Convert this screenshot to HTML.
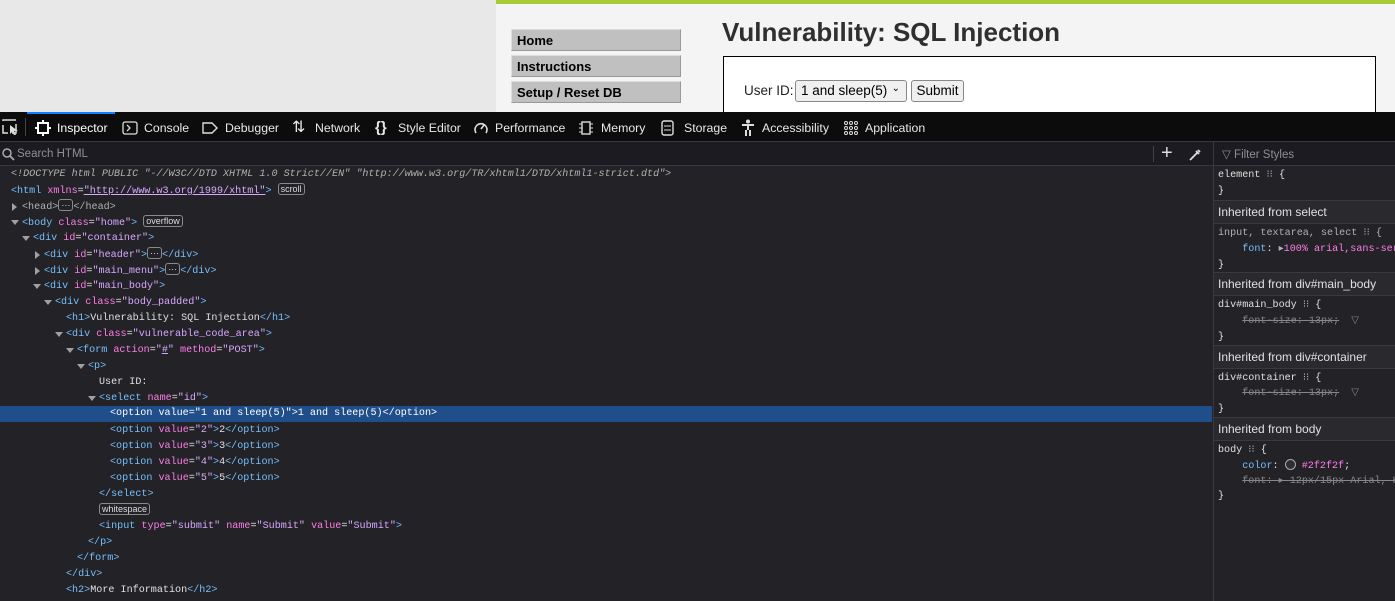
<!DOCTYPE html>
<html><head><style>
*{margin:0;padding:0;box-sizing:border-box}
body{width:1395px;height:601px;overflow:hidden;background:#232327;font-family:"Liberation Sans",sans-serif;position:relative}
.abs{position:absolute}
.m{font-family:"Liberation Mono",monospace;font-size:10.1px;white-space:pre;color:#e0e0e2}
.t{color:#75bfff}.a{color:#ff7de9}.v{color:#d7a8ff}.g{color:#b1b1b3}
.row{position:absolute;height:16px;line-height:16px;left:0;width:1212px}
.arr{position:absolute;top:5px;width:0;height:0}
.dn{border-left:4px solid transparent;border-right:4px solid transparent;border-top:5px solid #a0a0a0}
.rt{border-top:4px solid transparent;border-bottom:4px solid transparent;border-left:5px solid #a0a0a0;top:4px}
.badge{display:inline-block;border:1px solid #8a8a8a;border-radius:3px;font-size:9px;line-height:10px;padding:0 2px;color:#ddd;vertical-align:1px;font-family:"Liberation Sans",sans-serif}
.tb{position:absolute;top:113px;height:30px;line-height:30px;color:#e8e8e8;font-size:12.3px}
.menu{position:absolute;left:511px;width:170px;height:22px;background:#c0c0c0;border:1px solid #999;border-top-color:#ddd;border-left-color:#ddd;font-weight:bold;font-size:13px;line-height:21px;padding-left:5px;color:#000}
.sec{position:absolute;left:1214px;width:181px;height:24px;background:#2a2a2e;border-top:1px solid #3a3a3e;border-bottom:1px solid #3a3a3e;color:#e0e0e2;font-size:12px;line-height:23px;padding-left:4px}
.sr{position:absolute;left:1218px;line-height:16px}
</style></head><body>
<div class="abs" style="left:0;top:0;width:496px;height:112px;background:#e8e8e8"></div>
<div class="abs" style="left:496px;top:0;width:899px;height:112px;background:#f4f4f4"></div>
<div class="abs" style="left:496px;top:0;width:899px;height:4px;background:#a5cc36"></div>
<div class="menu" style="top:29px">Home</div>
<div class="menu" style="top:55px">Instructions</div>
<div class="menu" style="top:81px">Setup / Reset DB</div>
<div class="abs" style="left:722px;top:17px;font-size:26px;font-weight:bold;color:#2f2f2f">Vulnerability: SQL Injection</div>
<div class="abs" style="left:723px;top:56px;width:653px;height:60px;background:#fff;border:1px solid #000"></div>
<div class="abs" style="left:744px;top:83px;font-size:13.5px;color:#222">User ID:</div>
<div class="abs" style="left:795px;top:80px;width:112px;height:22px;border:1px solid #888;border-radius:3px;background:#f0f0f0;font-size:13.5px;line-height:20px;padding-left:5px;color:#000">1 and sleep(5)<span style="font-size:10px;position:absolute;right:6px;top:-2px">&#8964;</span></div>
<div class="abs" style="left:911px;top:80px;width:53px;height:22px;border:1px solid #888;border-radius:3px;background:#efefef;font-size:13.5px;line-height:20px;text-align:center;color:#000">Submit</div>

<div class="abs" style="left:0;top:112px;width:1395px;height:30px;background:#0c0c0d;border-bottom:1px solid #38383d"></div>
<div class="abs" style="left:27px;top:112px;width:88px;height:2px;background:#0a84ff"></div>
<div class="abs" style="left:25px;top:118px;width:1px;height:18px;background:#444"></div>
<svg class="abs" style="left:2px;top:119px" width="18" height="17"><rect x="1" y="1" width="13" height="13" fill="none" stroke="#ddd" stroke-width="1.5" stroke-dasharray="13 4"/><path d="M8 6 L16 12 L12 12 L14 16 L12 16 L10 13 L8 15Z" fill="#ddd"/></svg>
<svg class="abs" style="left:35px;top:120px" width="16" height="16"><rect x="3" y="3" width="10" height="10" fill="none" stroke="#fff" stroke-width="2"/><path d="M8 0v3M8 13v3M0 8h3M13 8h3" stroke="#fff" stroke-width="2"/></svg>
<div class="tb" style="left:57px;color:#fff">Inspector</div>
<svg class="abs" style="left:122px;top:121px" width="16" height="14"><rect x="1" y="1" width="14" height="12" rx="2" fill="none" stroke="#ddd" stroke-width="1.3"/><path d="M5 4l3 3-3 3" fill="none" stroke="#ddd" stroke-width="1.3"/></svg>
<div class="tb" style="left:144px">Console</div>
<svg class="abs" style="left:202px;top:121px" width="16" height="14"><path d="M1 2h9l5 5-5 5H1z" fill="none" stroke="#ddd" stroke-width="1.4"/></svg>
<div class="tb" style="left:225px">Debugger</div>
<div class="tb" style="left:292px;font-size:16px">&#8645;</div>
<div class="tb" style="left:315px">Network</div>
<div class="tb" style="left:375px;font-size:15px;font-weight:bold">{}</div>
<div class="tb" style="left:398px">Style Editor</div>
<svg class="abs" style="left:473px;top:120px" width="16" height="16"><path d="M3 13A6 6 0 1 1 13 13" fill="none" stroke="#ddd" stroke-width="1.6"/><path d="M8 9l3-4" stroke="#ddd" stroke-width="1.6"/></svg>
<div class="tb" style="left:495px">Performance</div>
<svg class="abs" style="left:578px;top:120px" width="16" height="16"><rect x="4" y="2" width="8" height="12" fill="none" stroke="#ddd" stroke-width="1.4"/><path d="M1 4h3M1 8h3M1 12h3M12 4h3M12 8h3M12 12h3" stroke="#ddd"/></svg>
<div class="tb" style="left:601px">Memory</div>
<svg class="abs" style="left:661px;top:120px" width="14" height="16"><rect x="1" y="1" width="11" height="14" rx="2" fill="none" stroke="#ddd" stroke-width="1.4"/><path d="M3 6h7M3 10h7" stroke="#ddd"/></svg>
<div class="tb" style="left:684px">Storage</div>
<svg class="abs" style="left:741px;top:119px" width="14" height="18"><circle cx="7" cy="2.5" r="2" fill="#ddd"/><path d="M1 6h12M7 6v5M5 11v6M9 11v6" stroke="#ddd" stroke-width="2"/></svg>
<div class="tb" style="left:762px">Accessibility</div>
<svg class="abs" style="left:844px;top:121px" width="14" height="14" fill="none" stroke="#ddd" stroke-width="1"><circle cx="2" cy="2" r="1.5"/><circle cx="7" cy="2" r="1.5"/><circle cx="12" cy="2" r="1.5"/><circle cx="2" cy="7" r="1.5"/><circle cx="7" cy="7" r="1.5"/><circle cx="12" cy="7" r="1.5"/><circle cx="2" cy="12" r="1.5"/><circle cx="7" cy="12" r="1.5"/><circle cx="12" cy="12" r="1.5"/></svg>
<div class="tb" style="left:865px">Application</div>

<div class="abs" style="left:0;top:142px;width:1213px;height:24px;background:#1c1b22;border-bottom:1px solid #38383d"></div>
<svg class="abs" style="left:2px;top:148px" width="13" height="13"><circle cx="5" cy="5" r="4" fill="none" stroke="#aaa" stroke-width="1.5"/><path d="M8 8l4 4" stroke="#aaa" stroke-width="1.8"/></svg>
<div class="abs" style="left:17px;top:148px;font-size:11.5px;color:#8f8f93">Search HTML</div>
<div class="abs" style="left:1153px;top:146px;width:1px;height:16px;background:#444"></div>
<div class="abs" style="left:1161px;top:142px;font-size:20px;color:#ddd">+</div>
<svg class="abs" style="left:1188px;top:148px" width="14" height="14"><path d="M2 12L9 5M8 3l3 3M10 2l2 2" stroke="#ddd" stroke-width="1.8"/></svg>

<div class="abs" style="left:0;top:166px;width:1213px;height:435px;background:#232327"></div>
<div class="row" style="top:406px;background:#204e8a"></div>
<div class="row m" style="top:167px;left:11px"><i class="g">&lt;!DOCTYPE html PUBLIC "-//W3C//DTD XHTML 1.0 Strict//EN" "http://www.w3.org/TR/xhtml1/DTD/xhtml1-strict.dtd"&gt;</i></div>
<div class="row m" style="top:183px;left:11px"><span class="t">&lt;html</span> <span class="a">xmlns</span>=<span class="v" style="text-decoration:underline">"http://www.w3.org/1999/xhtml"</span><span class="t">&gt;</span> <span class="badge">scroll</span></div>
<div class="row m" style="top:199px;left:11px"><span class="arr rt" style="left:1px"></span><span style="margin-left:11px" class="g">&lt;head&gt;<span class="badge">···</span>&lt;/head&gt;</span></div>
<div class="row m" style="top:215px;left:11px"><span class="arr dn" style="left:0"></span><span style="margin-left:11px"><span class="t">&lt;body</span> <span class="a">class</span>=<span class="v">"home"</span><span class="t">&gt;</span> <span class="badge">overflow</span></span></div>
<div class="row m" style="top:231px;left:22px"><span class="arr dn" style="left:0"></span><span style="margin-left:11px"><span class="t">&lt;div</span> <span class="a">id</span>=<span class="v">"container"</span><span class="t">&gt;</span></span></div>
<div class="row m" style="top:247px;left:33px"><span class="arr rt" style="left:2px"></span><span style="margin-left:11px"><span class="t">&lt;div</span> <span class="a">id</span>=<span class="v">"header"</span><span class="t">&gt;</span><span class="badge">···</span><span class="t">&lt;/div&gt;</span></span></div>
<div class="row m" style="top:263px;left:33px"><span class="arr rt" style="left:2px"></span><span style="margin-left:11px"><span class="t">&lt;div</span> <span class="a">id</span>=<span class="v">"main_menu"</span><span class="t">&gt;</span><span class="badge">···</span><span class="t">&lt;/div&gt;</span></span></div>
<div class="row m" style="top:279px;left:33px"><span class="arr dn" style="left:0"></span><span style="margin-left:11px"><span class="t">&lt;div</span> <span class="a">id</span>=<span class="v">"main_body"</span><span class="t">&gt;</span></span></div>
<div class="row m" style="top:295px;left:44px"><span class="arr dn" style="left:0"></span><span style="margin-left:11px"><span class="t">&lt;div</span> <span class="a">class</span>=<span class="v">"body_padded"</span><span class="t">&gt;</span></span></div>
<div class="row m" style="top:311px;left:66px"><span class="t">&lt;h1&gt;</span>Vulnerability: SQL Injection<span class="t">&lt;/h1&gt;</span></div>
<div class="row m" style="top:327px;left:55px"><span class="arr dn" style="left:0"></span><span style="margin-left:11px"><span class="t">&lt;div</span> <span class="a">class</span>=<span class="v">"vulnerable_code_area"</span><span class="t">&gt;</span></span></div>
<div class="row m" style="top:343px;left:66px"><span class="arr dn" style="left:0"></span><span style="margin-left:11px"><span class="t">&lt;form</span> <span class="a">action</span>=<span class="v">"<u>#</u>"</span> <span class="a">method</span>=<span class="v">"POST"</span><span class="t">&gt;</span></span></div>
<div class="row m" style="top:359px;left:77px"><span class="arr dn" style="left:0"></span><span style="margin-left:11px"><span class="t">&lt;p&gt;</span></span></div>
<div class="row m" style="top:375px;left:99px">User ID:</div>
<div class="row m" style="top:391px;left:88px"><span class="arr dn" style="left:0"></span><span style="margin-left:11px"><span class="t">&lt;select</span> <span class="a">name</span>=<span class="v">"id"</span><span class="t">&gt;</span></span></div>
<div class="row m" style="top:406px;left:110px;color:#fff">&lt;option value="1 and sleep(5)"&gt;1 and sleep(5)&lt;/option&gt;</div>
<div class="row m" style="top:423px;left:110px"><span class="t">&lt;option</span> <span class="a">value</span>=<span class="v">"2"</span><span class="t">&gt;</span>2<span class="t">&lt;/option&gt;</span></div>
<div class="row m" style="top:439px;left:110px"><span class="t">&lt;option</span> <span class="a">value</span>=<span class="v">"3"</span><span class="t">&gt;</span>3<span class="t">&lt;/option&gt;</span></div>
<div class="row m" style="top:455px;left:110px"><span class="t">&lt;option</span> <span class="a">value</span>=<span class="v">"4"</span><span class="t">&gt;</span>4<span class="t">&lt;/option&gt;</span></div>
<div class="row m" style="top:471px;left:110px"><span class="t">&lt;option</span> <span class="a">value</span>=<span class="v">"5"</span><span class="t">&gt;</span>5<span class="t">&lt;/option&gt;</span></div>
<div class="row m" style="top:487px;left:99px"><span class="t">&lt;/select&gt;</span></div>
<div class="row m" style="top:503px;left:99px"><span class="badge">whitespace</span></div>
<div class="row m" style="top:519px;left:99px"><span class="t">&lt;input</span> <span class="a">type</span>=<span class="v">"submit"</span> <span class="a">name</span>=<span class="v">"Submit"</span> <span class="a">value</span>=<span class="v">"Submit"</span><span class="t">&gt;</span></div>
<div class="row m" style="top:535px;left:88px"><span class="t">&lt;/p&gt;</span></div>
<div class="row m" style="top:551px;left:77px"><span class="t">&lt;/form&gt;</span></div>
<div class="row m" style="top:567px;left:66px"><span class="t">&lt;/div&gt;</span></div>
<div class="row m" style="top:583px;left:66px"><span class="t">&lt;h2&gt;</span>More Information<span class="t">&lt;/h2&gt;</span></div>

<div class="abs" style="left:1213px;top:142px;width:1px;height:459px;background:#3a3a3e"></div>
<div class="abs" style="left:1214px;top:142px;width:181px;height:459px;background:#232327"></div>
<div class="abs" style="left:1214px;top:142px;width:181px;height:24px;background:#1c1b22;border-bottom:1px solid #38383d"></div>
<div class="abs" style="left:1222px;top:147px;font-size:11.5px;color:#8f8f93">&#9661; Filter Styles</div>
<div class="sr m" style="top:168px">element <span class="g">⁝⁝</span> {</div>
<div class="sr m" style="top:184px">}</div>
<div class="sec" style="top:200px">Inherited from select</div>
<div class="sr m" style="top:226px;color:#b1b1b3">input, textarea, select <span>⁝⁝</span> {</div>
<div class="sr m" style="top:242px">    <span class="t">font</span>: <span class="g">▸</span><span class="a">100% arial,sans-serif</span></div>
<div class="sr m" style="top:258px">}</div>
<div class="sec" style="top:272px">Inherited from div#main_body</div>
<div class="sr m" style="top:298px">div#main_body <span class="g">⁝⁝</span> {</div>
<div class="sr m" style="top:314px;color:#888">    <s>font-size: 13px;</s>  ▽</div>
<div class="sr m" style="top:330px">}</div>
<div class="sec" style="top:345px">Inherited from div#container</div>
<div class="sr m" style="top:371px">div#container <span class="g">⁝⁝</span> {</div>
<div class="sr m" style="top:386px;color:#888">    <s>font-size: 13px;</s>  ▽</div>
<div class="sr m" style="top:402px">}</div>
<div class="sec" style="top:417px">Inherited from body</div>
<div class="sr m" style="top:443px">body <span class="g">⁝⁝</span> {</div>
<div class="sr m" style="top:459px">    <span class="t">color</span>: <span style="display:inline-block;width:11px;height:11px;border-radius:50%;background:#2f2f2f;border:1px solid #aaa;vertical-align:-2px"></span> <span class="a">#2f2f2f</span>;</div>
<div class="sr m" style="top:474px;color:#888">    <s>font: ▸ 12px/15px Arial, Helvetica</s></div>
<div class="sr m" style="top:489px">}</div>
</body></html>
